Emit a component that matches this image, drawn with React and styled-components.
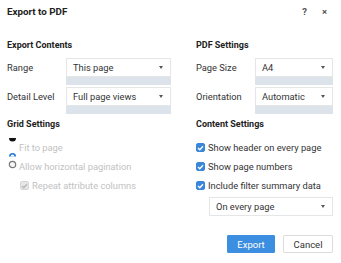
import React from 'react'
import styled, { createGlobalStyle } from 'styled-components'

const GlobalStyle = createGlobalStyle`
  body {
    margin: 0;
    background: #fff;
    font-family: Roboto, "Liberation Sans", sans-serif;
  }
`

const Dialog = styled.div`
  width: 341px;
  height: 263px;
  display: flex;
  flex-direction: column;
  background: #fff;
  color: #333;
  font-size: 9.3px;
`

const Header = styled.div`
  height: 22px;
  display: flex;
  align-items: center;
  justify-content: space-between;
  padding: 0 14px 0 7px;
`

const Title = styled.div`
  font-weight: 700;
  font-size: 9.8px;
  color: #222;
`

const HeaderIcons = styled.div`
  display: flex;
  align-items: center;
  gap: 15px;
  font-size: 9.5px;
  font-weight: 700;
  color: #555;
`

const Body = styled.div`
  flex: 1;
  display: grid;
  grid-template-columns: 164px 137px;
  column-gap: 25px;
  padding: 16px 8px 0 7px;
`

const Column = styled.div`
  display: flex;
  flex-direction: column;
`

const Heading = styled.div`
  font-weight: 700;
  font-size: 9px;
  line-height: 14px;
  color: #222;
  margin: ${p => p.$top || 0}px 0 6px;
`

const FieldRow = styled.div`
  display: flex;
  align-items: flex-start;
  margin-bottom: 2px;
`

const Label = styled.div`
  width: 59px;
  line-height: 19px;
  color: #333;
`

const SelectWrap = styled.div`
  flex: 1;
  display: flex;
  flex-direction: column;
`

const SelectBox = styled.div`
  position: relative;
  height: 19px;
  box-sizing: border-box;
  border: 1px solid #e4e6e8;
  padding-left: 6px;
  line-height: 17px;
  color: #333;
  background: #fff;
  margin-left: ${p => p.$indent || 0}px;
  margin-top: ${p => p.$top || 0}px;

  &::after {
    content: '';
    position: absolute;
    right: 7px;
    top: 7px;
    border-left: 2.5px solid transparent;
    border-right: 2.5px solid transparent;
    border-top: 3px solid #555;
  }
`

const ListBar = styled.div`
  height: 8px;
  background: #dde3ea;
`

const RadioGroup = styled.div`
  display: flex;
  margin-top: -2px;
  padding-left: 1px;
`

const RadioMarks = styled.svg`
  width: 11px;
  height: 35px;
  flex: none;
`

const RadioTexts = styled.div`
  display: flex;
  flex-direction: column;
  gap: 7px;
  padding-top: 7px;
`

const OptionText = styled.div`
  line-height: 12px;
  color: ${p => (p.$disabled ? '#c2c2c2' : '#333')};
  white-space: nowrap;
`

const CheckRow = styled.div`
  display: flex;
  align-items: center;
  gap: 3px;
  height: 12px;
  margin-top: ${p => p.$top || 0}px;
  padding-left: ${p => p.$indent || 0}px;
`

const Box = styled.span`
  width: 9px;
  height: 9px;
  box-sizing: border-box;
  border-radius: 2px;
  flex: none;
  display: flex;
  align-items: center;
  justify-content: center;
  margin-top: -1px;
  background: ${p => (p.$disabled ? '#e6e6e6' : '#3a86d8')};
  border: 1px solid ${p => (p.$disabled ? '#d6d6d6' : '#3a86d8')};
`

const CheckList = styled.div`
  display: flex;
  flex-direction: column;
  gap: 7px;
  margin-top: 5px;
`

const Footer = styled.div`
  display: flex;
  justify-content: flex-end;
  gap: 8px;
  padding: 0 8px 10px 0;
`

const Button = styled.button`
  height: 18px;
  width: ${p => p.$w}px;
  padding: 0;
  box-sizing: border-box;
  font-family: inherit;
  font-size: 9.5px;
  border-radius: 1px;
  border: 1px solid ${p => (p.$primary ? '#3b8ee0' : '#dcdcdc')};
  background: ${p => (p.$primary ? '#3b8ee0' : '#fff')};
  color: ${p => (p.$primary ? '#fff' : '#333')};
`

function Check({ disabled }) {
  return (
    <Box $disabled={disabled}>
      <svg width="7" height="6" viewBox="0 0 7 6">
        <path d="M1 3 L2.8 4.8 L6 1.2" fill="none" stroke={disabled ? '#b5b5b5' : '#fff'} strokeWidth="1.3" />
      </svg>
    </Box>
  )
}

function Select({ value, bar = true, indent, top }) {
  return (
    <SelectWrap>
      <SelectBox $indent={indent} $top={top}>{value}</SelectBox>
      {bar && <ListBar />}
    </SelectWrap>
  )
}

export default function App() {
  return (
    <>
      <GlobalStyle />
      <Dialog>
        <Header>
          <Title>Export to PDF</Title>
          <HeaderIcons>
            <span>?</span>
            <span>×</span>
          </HeaderIcons>
        </Header>
        <Body>
          <Column>
            <Heading>Export Contents</Heading>
            <FieldRow>
              <Label>Range</Label>
              <Select value="This page" />
            </FieldRow>
            <FieldRow>
              <Label>Detail Level</Label>
              <Select value="Full page views" />
            </FieldRow>
            <Heading $top={1}>Grid Settings</Heading>
            <RadioGroup>
              <RadioMarks viewBox="0 0 11 35">
                <path d="M1 3 A3.5 3.5 0 0 0 8 3 Z" fill="#111" />
                <path d="M1 21.5 A3.5 3.5 0 0 1 8 21.5 Z" fill="#1f78d1" />
                <path d="M2.6 21.5 A1.9 1.9 0 0 1 6.4 21.5 Z" fill="#fff" />
                <circle cx="4.5" cy="29.5" r="3.2" fill="#f4f4f4" stroke="#777" strokeWidth="1.2" />
              </RadioMarks>
              <RadioTexts>
                <OptionText $disabled>Fit to page</OptionText>
                <OptionText $disabled>Allow horizontal pagination</OptionText>
              </RadioTexts>
            </RadioGroup>
            <CheckRow $top={7} $indent={13}>
              <Check disabled />
              <OptionText $disabled>Repeat attribute columns</OptionText>
            </CheckRow>
          </Column>
          <Column>
            <Heading>PDF Settings</Heading>
            <FieldRow>
              <Label>Page Size</Label>
              <Select value="A4" />
            </FieldRow>
            <FieldRow>
              <Label>Orientation</Label>
              <Select value="Automatic" />
            </FieldRow>
            <Heading $top={1}>Content Settings</Heading>
            <CheckList>
              <CheckRow>
                <Check />
                <OptionText>Show header on every page</OptionText>
              </CheckRow>
              <CheckRow>
                <Check />
                <OptionText>Show page numbers</OptionText>
              </CheckRow>
              <CheckRow>
                <Check />
                <OptionText>Include filter summary data</OptionText>
              </CheckRow>
            </CheckList>
            <Select value="On every page" bar={false} indent={13} top={5} />
          </Column>
        </Body>
        <Footer>
          <Button $primary $w={48}>Export</Button>
          <Button $w={50}>Cancel</Button>
        </Footer>
      </Dialog>
    </>
  )
}
